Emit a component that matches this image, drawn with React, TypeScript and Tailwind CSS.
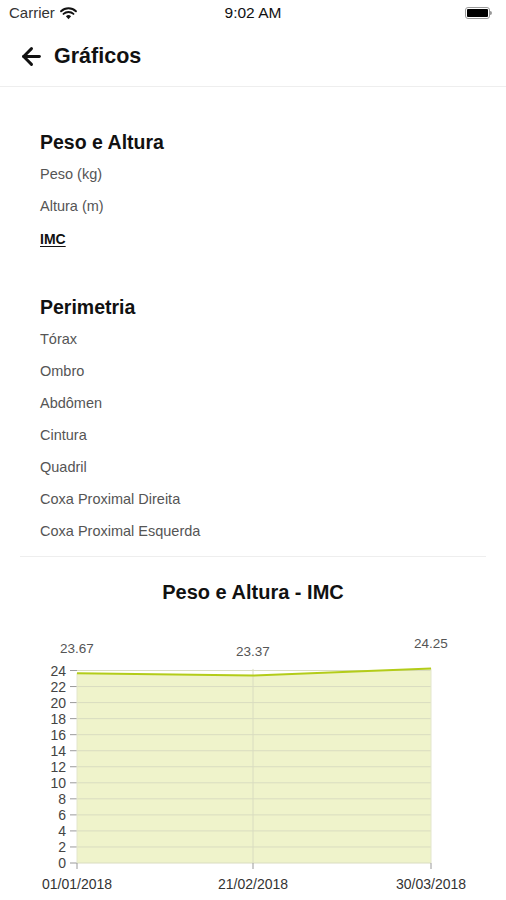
import { ArrowLeft } from "lucide-react";

const pesoItems = ["Peso (kg)", "Altura (m)", "IMC"];
const perimetriaItems = [
  "Tórax",
  "Ombro",
  "Abdômen",
  "Cintura",
  "Quadril",
  "Coxa Proximal Direita",
  "Coxa Proximal Esquerda",
];

const points = [
  { x: 77, v: 23.67, label: "23.67", date: "01/01/2018", ly: 23 },
  { x: 253, v: 23.37, label: "23.37", date: "21/02/2018", ly: 26 },
  { x: 431, v: 24.25, label: "24.25", date: "30/03/2018", ly: 18 },
];

const X0 = 77;
const X1 = 431;
const Y0 = 233;
const yOf = (v: number) => Y0 - v * 8.02;

function StatusBar() {
  return (
    <div className="h-[26px] flex items-center justify-between px-[9px] text-[15px] text-[#111]">
      <div className="flex items-center gap-[5px] w-[130px]">
        <span className="text-[#333]">Carrier</span>
        <svg width="17" height="13" viewBox="0 0 16 12">
          <path d="M8 11.5 L5.6 8.6 A3.6 3.6 0 0 1 10.4 8.6 Z" fill="#111" />
          <path d="M3.3 6.4 A6.8 6.8 0 0 1 12.7 6.4" stroke="#111" strokeWidth="1.8" fill="none" strokeLinecap="round" />
          <path d="M1 3.9 A10.2 10.2 0 0 1 15 3.9" stroke="#111" strokeWidth="1.8" fill="none" strokeLinecap="round" />
        </svg>
      </div>
      <span className="text-[15.5px]">9:02 AM</span>
      <div className="w-[130px] flex justify-end pr-[5px]">
        <div className="flex items-center">
          <div className="w-[25px] h-[12px] rounded-[3px] border border-[#999] p-[1px]">
            <div className="w-full h-full bg-black rounded-[1px]" />
          </div>
          <div className="w-[2px] h-[4px] bg-[#999] rounded-r-sm" />
        </div>
      </div>
    </div>
  );
}

function Section({ title, items }: { title: string; items: string[] }) {
  return (
    <div className="px-10">
      <div className="h-8 flex items-center text-[19.5px] font-bold text-[#111]">{title}</div>
      {items.map((it) => (
        <div
          key={it}
          className={
            it === "IMC"
              ? "h-8 flex items-center text-[14px] font-bold text-[#111] underline underline-offset-2"
              : "h-8 flex items-center text-[14.5px] text-[#555]"
          }
        >
          {it}
        </div>
      ))}
    </div>
  );
}

function Chart() {
  const ticks = Array.from({ length: 13 }, (_, i) => i * 2);
  const line = points.map((p) => `${p.x},${yOf(p.v)}`).join(" ");
  const area = `${X0},${Y0} ${line} ${X1},${Y0}`;
  return (
    <svg width="506" height="270" viewBox="0 0 506 270" className="block mt-[26px]" fontFamily="'Liberation Sans', Arial, sans-serif">
      <polygon points={area} fill="#eff3cb" />
      {ticks.map((t) => (
        <g key={t}>
          <line x1={X0} x2={X1} y1={yOf(t)} y2={yOf(t)} stroke="#d9dcc0" strokeWidth="1" />
          <line x1={X0 - 7} x2={X0} y1={yOf(t)} y2={yOf(t)} stroke="#9a9a9a" strokeWidth="1" />
          <text x={66} y={yOf(t) + 5} textAnchor="end" fontSize="14" fill="#444">
            {t}
          </text>
        </g>
      ))}
      <line x1={253} x2={253} y1={yOf(24.2)} y2={Y0} stroke="#d9dcc0" strokeWidth="1" />
      <line x1={X0} x2={X0} y1={yOf(23.67)} y2={Y0} stroke="#e3e6cc" strokeWidth="1" />
      <line x1={X1} x2={X1} y1={yOf(24.25)} y2={Y0} stroke="#e3e6cc" strokeWidth="1" />
      {points.map((p) => (
        <g key={p.date}>
          <line x1={p.x} x2={p.x} y1={Y0} y2={Y0 + 6} stroke="#9a9a9a" strokeWidth="1" />
          <text x={p.x} y={Y0 + 26} textAnchor="middle" fontSize="14" fill="#333">
            {p.date}
          </text>
          <text x={p.x} y={p.ly} textAnchor="middle" fontSize="13.5" fill="#555">
            {p.label}
          </text>
        </g>
      ))}
      <polyline points={line} fill="none" stroke="#b3cc19" strokeWidth="2" />
    </svg>
  );
}

export default function App() {
  return (
    <div className="w-[506px] h-[900px] bg-white overflow-hidden font-['Liberation_Sans',Arial,sans-serif]">
      <StatusBar />
      <div className="h-[61px] flex items-center gap-[9px] px-[18px] border-b border-[#eeeeee]">
        <ArrowLeft size={27} strokeWidth={2.6} color="#111" />
        <span className="text-[21.5px] font-bold text-[#111]">Gráficos</span>
      </div>
      <div className="pt-[40px]">
        <Section title="Peso e Altura" items={pesoItems} />
        <div className="h-[37px]" />
        <Section title="Perimetria" items={perimetriaItems} />
      </div>
      <div className="mx-5 mt-[8px] border-t border-[#eeeeee]" />
      <div className="mt-[23px] h-6 flex items-center justify-center text-[20px] font-bold text-[#111]">
        Peso e Altura - IMC
      </div>
      <Chart />
    </div>
  );
}
